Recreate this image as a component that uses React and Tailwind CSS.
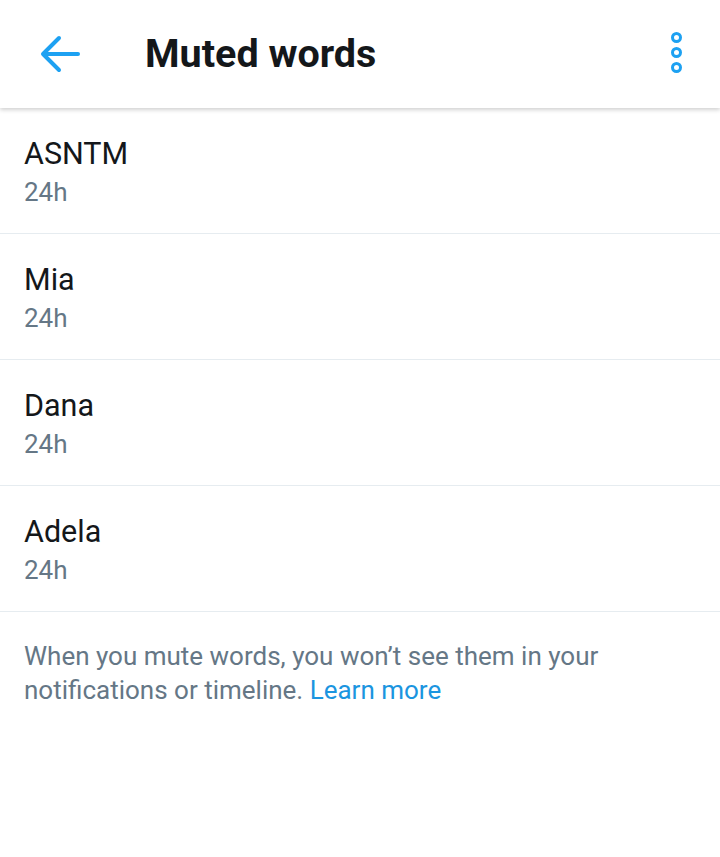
import React from 'react';

const words = ['ASNTM', 'Mia', 'Dana', 'Adela'];

const App = () => {
    return (
        <div className="w-[720px] h-[857px] bg-white font-['Roboto',sans-serif]">

            {/* Header */}
            <div className="relative z-10 h-[108px] flex items-center bg-white shadow-[0_2px_4px_rgba(0,0,0,0.18)]">
                <div className="w-[145px] flex items-center pl-[40px]">
                    <svg width="42" height="40" viewBox="0 0 42 40" fill="none" stroke="#1da1f2" strokeWidth="4" strokeLinecap="round" strokeLinejoin="round">
                        <path d="M38 20H4" />
                        <path d="M19 4 3 20l16 16" />
                    </svg>
                </div>
                <h1 className="flex-1 text-[39.5px] font-bold text-[#14171a] leading-none">Muted words</h1>
                <div className="pr-[38px] pb-[4px] flex flex-col items-center gap-[4px]">
                    <span className="w-[11px] h-[11px] rounded-full border-[3px] border-[#1da1f2]"></span>
                    <span className="w-[11px] h-[11px] rounded-full border-[3px] border-[#1da1f2]"></span>
                    <span className="w-[11px] h-[11px] rounded-full border-[3px] border-[#1da1f2]"></span>
                </div>
            </div>

            {/* List */}
            <div>
                {words.map((w) => (
                    <div key={w} className="h-[126px] border-b border-[#e6ecf0] px-[24px] pt-[26px]">
                        <div className="text-[30.5px] leading-[40px] text-[#14171a]">{w}</div>
                        <div className="text-[26px] leading-[36px] text-[#657786]">24h</div>
                    </div>
                ))}
            </div>

            {/* Footer note */}
            <p className="px-[24px] pt-[27px] text-[26px] leading-[34px] text-[#657786]">
                When you mute words, you won’t see them in your notifications or timeline.{' '}
                <span className="text-[#1b95e0]">Learn more</span>
            </p>

        </div>
    );
};

export default App;
